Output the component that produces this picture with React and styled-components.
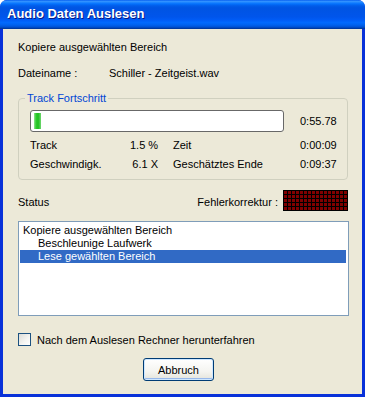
import styled, { createGlobalStyle } from "styled-components"

const GlobalStyle = createGlobalStyle`
    html, body {
        margin: 0;
        padding: 0;
        background: #ffffff;
    }
    * {
        box-sizing: border-box;
    }
`

const Fenster = styled.div`
    width: 365px;
    height: 397px;
    display: flex;
    flex-direction: column;
    border-radius: 7px 7px 0 0;
    overflow: hidden;
    background: #0831d9;
    font-family: "Liberation Sans", Arial, sans-serif;
    font-size: 11px;
    color: #000000;
`

const Titelleiste = styled.div`
    height: 29px;
    flex: none;
    display: flex;
    align-items: center;
    padding: 0 0 2px 7px;
    background: linear-gradient(
        to bottom,
        #0058ee 0%,
        #3593ff 4%,
        #288eff 7%,
        #127dff 10%,
        #036ffc 14%,
        #0262ee 18%,
        #0057e5 24%,
        #0054e3 30%,
        #0055eb 58%,
        #005bf5 68%,
        #026afe 78%,
        #0062ef 86%,
        #0052d6 93%,
        #0040ab 97%,
        #003092 100%
    );
    color: #ffffff;
    font-weight: bold;
    font-size: 13px;
    text-shadow: 1px 1px 0 #0a1883;
`

const Inhalt = styled.div`
    flex: 1;
    margin: 0 3px 3px 3px;
    background: #ece9d8;
    padding: 12px 14px 0 15px;
    display: flex;
    flex-direction: column;
`

const Zeile = styled.div`
    display: flex;
    align-items: center;
    height: 13px;
    line-height: 13px;
    margin-top: ${(p) => p.$oben || 0}px;
`

const Spalte = styled.span`
    width: ${(p) => p.$breite}px;
    flex: none;
    text-align: ${(p) => (p.$rechts ? "right" : "left")};
    white-space: nowrap;
`

const Gruppe = styled.fieldset`
    margin: 12px 0 0 0;
    padding: 5px 11px 0 11px;
    border: 1px solid #d0d0bf;
    border-radius: 4px;
    width: 330px;
    min-width: 0;
    height: 88px;

    legend {
        color: #0046d5;
        padding: 0 2px;
        margin-left: -5px;
        line-height: 13px;
    }
`

const FortschrittZeile = styled.div`
    display: flex;
    align-items: center;
    height: 22px;
`

const Balken = styled.div`
    width: 254px;
    height: 22px;
    border: 1px solid #686868;
    border-radius: 3px;
    background: #ffffff;
    padding: 2px;
    flex: none;
`

const BalkenFuellung = styled.div`
    height: 100%;
    width: 7px;
    margin-left: 1px;
    background: linear-gradient(
        to right,
        #8ee38e 0%,
        #2fcc2f 30%,
        #20c020 60%,
        #6fd66f 100%
    );
`

const Zeitwert = styled.span`
    margin-left: 16px;
`

const StatusZeile = styled.div`
    display: flex;
    align-items: center;
    justify-content: space-between;
    margin-top: 10px;
    height: 21px;
    width: 330px;

    > span {
        margin-top: 3px;
    }
`

const FehlerGruppe = styled.div`
    display: flex;
    align-items: center;
    gap: 5px;

    > span {
        margin-top: 3px;
    }
`

const Anzeige = styled.div`
    display: grid;
    grid-template-columns: repeat(16, 3px);
    grid-auto-rows: 3px;
    gap: 1px;
    padding: 1px;
    background: #000000;

    span {
        background: #800000;
    }
`

const Liste = styled.div`
    margin-top: 10px;
    width: 331px;
    height: 95px;
    border: 1px solid #7f9db9;
    background: #ffffff;
    padding: 2px 1px;
`

const Eintrag = styled.div`
    height: 13px;
    line-height: 13px;
    padding-left: ${(p) => (p.$einzug ? 18 : 3)}px;
    background: ${(p) => (p.$aktiv ? "#316ac5" : "transparent")};
    color: ${(p) => (p.$aktiv ? "#ffffff" : "#000000")};
    width: 326px;
`

const Kontrollzeile = styled.label`
    display: flex;
    align-items: center;
    gap: 6px;
    margin-top: 17px;
    height: 13px;
`

const Kaestchen = styled.span`
    width: 13px;
    height: 13px;
    border: 1px solid #1c5180;
    background: linear-gradient(135deg, #dcdcd7 0%, #f5f5f2 60%, #ffffff 100%);
    flex: none;
`

const Knopf = styled.button`
    align-self: flex-start;
    margin: 12px 0 0 125px;
    width: 71px;
    height: 23px;
    border: 1px solid #003c74;
    border-radius: 3px;
    background: linear-gradient(to bottom, #ffffff 0%, #f4f4f0 60%, #e3e3db 100%);
    box-shadow: inset 0 0 0 1px #cee7ff, inset 0 -2px 0 #98b8ea;
    font-family: "Liberation Sans", Arial, sans-serif;
    font-size: 11px;
    color: #000000;
    padding: 0;
`

const zellen = Array.from({ length: 80 })

const werte = [
    ["Track", "1.5 %", "Zeit", "0:00:09"],
    ["Geschwindigk.", "6.1 X", "Geschätztes Ende", "0:09:37"],
]

const eintraege = [
    { text: "Kopiere ausgewählten Bereich" },
    { text: "Beschleunige Laufwerk", einzug: true },
    { text: "Lese gewählten Bereich", einzug: true, aktiv: true },
]

export default function App() {
    return (
        <>
            <GlobalStyle />
            <Fenster>
                <Titelleiste>Audio Daten Auslesen</Titelleiste>
                <Inhalt>
                    <Zeile>Kopiere ausgewählten Bereich</Zeile>
                    <Zeile $oben={13}>
                        <Spalte $breite={91}>Dateiname :</Spalte>
                        <span>Schiller - Zeitgeist.wav</span>
                    </Zeile>
                    <Gruppe>
                        <legend>Track Fortschritt</legend>
                        <FortschrittZeile>
                            <Balken>
                                <BalkenFuellung />
                            </Balken>
                            <Zeitwert>0:55.78</Zeitwert>
                        </FortschrittZeile>
                        {werte.map((zeile, index) => (
                            <Zeile key={`${index}`} $oben={index === 0 ? 7 : 6}>
                                <Spalte $breite={100}>{zeile[0]}</Spalte>
                                <Spalte $breite={28} $rechts>
                                    {zeile[1]}
                                </Spalte>
                                <Spalte $breite={142} style={{ paddingLeft: 15 }}>
                                    {zeile[2]}
                                </Spalte>
                                <span>{zeile[3]}</span>
                            </Zeile>
                        ))}
                    </Gruppe>
                    <StatusZeile>
                        <span>Status</span>
                        <FehlerGruppe>
                            <span>Fehlerkorrektur :</span>
                            <Anzeige>
                                {zellen.map((_, index) => (
                                    <span key={`${index}`} />
                                ))}
                            </Anzeige>
                        </FehlerGruppe>
                    </StatusZeile>
                    <Liste>
                        {eintraege.map((eintrag, index) => (
                            <Eintrag
                                key={`${index}`}
                                $einzug={eintrag.einzug}
                                $aktiv={eintrag.aktiv}
                            >
                                {eintrag.text}
                            </Eintrag>
                        ))}
                    </Liste>
                    <Kontrollzeile>
                        <Kaestchen />
                        <span>Nach dem Auslesen Rechner herunterfahren</span>
                    </Kontrollzeile>
                    <Knopf>Abbruch</Knopf>
                </Inhalt>
            </Fenster>
        </>
    )
}
